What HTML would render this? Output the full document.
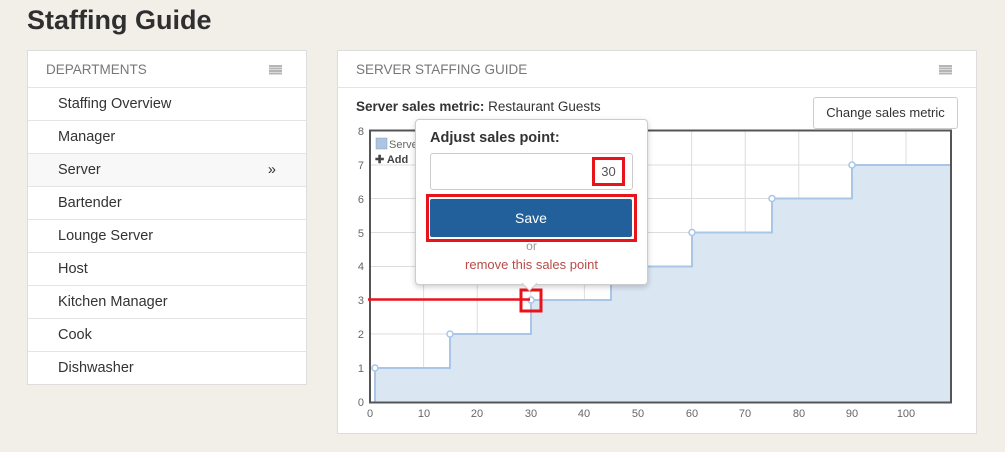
<!DOCTYPE html><html><head><style>
body{margin:0;width:1005px;height:452px;background:#f2efe9;font-family:"Liberation Sans",sans-serif;color:#333;position:relative;overflow:hidden}
.a{position:absolute}
h1{position:absolute;left:27px;top:5px;margin:0;font-size:27px;font-weight:bold;color:#2f2f2f}
.card{position:absolute;background:#fff;border:1px solid #ddd}
.row{height:32px;border-top:1px solid #e4e4e4;font-size:14.5px;line-height:32px;padding-left:30px;color:#333}
.hd{height:36px;line-height:38px;font-size:13.5px;color:#777;padding-left:18px;position:relative}
.ic{position:absolute;right:24px;top:14px;width:13px;height:10px;background:repeating-linear-gradient(#b5b5b5 0 2px,#fff 2px 2.5px)}
</style></head><body>
<h1>Staffing Guide</h1>
<div class="card" style="left:27px;top:50px;width:278px;height:333px">
<div class="hd">DEPARTMENTS<div class="ic"></div></div>
<div class="row">Staffing Overview</div><div class="row">Manager</div>
<div class="row" style="background:#f8f8f8;position:relative">Server<span style="position:absolute;right:30px">»</span></div>
<div class="row">Bartender</div><div class="row">Lounge Server</div><div class="row">Host</div><div class="row">Kitchen Manager</div><div class="row">Cook</div><div class="row">Dishwasher</div>
</div>
<div class="card" style="left:337px;top:50px;width:638px;height:382px">
<div class="hd">SERVER STAFFING GUIDE<div class="ic"></div></div>
<div style="border-top:1px solid #e4e4e4"></div>
<div class="a" style="left:18px;top:48px;font-size:13.5px"><b>Server sales metric:</b> Restaurant Guests</div>
<div class="a" style="left:475px;top:46px;width:143px;height:30px;border:1px solid #ccc;border-radius:3px;font-size:13px;line-height:30px;text-align:center">Change sales metric</div>
</div>
<svg class="a" style="left:0;top:0" width="1005" height="452">
<g stroke="#ddd" stroke-width="1">
<line x1="370" x2="951" y1="368" y2="368"/><line x1="370" x2="951" y1="334" y2="334"/><line x1="370" x2="951" y1="300" y2="300"/><line x1="370" x2="951" y1="266.5" y2="266.5"/><line x1="370" x2="951" y1="232.5" y2="232.5"/><line x1="370" x2="951" y1="198.5" y2="198.5"/><line x1="370" x2="951" y1="165" y2="165"/>
<line y1="131" y2="402" x1="423.6" x2="423.6"/><line y1="131" y2="402" x1="477.2" x2="477.2"/><line y1="131" y2="402" x1="530.8" x2="530.8"/><line y1="131" y2="402" x1="584.4" x2="584.4"/><line y1="131" y2="402" x1="638" x2="638"/><line y1="131" y2="402" x1="691.6" x2="691.6"/><line y1="131" y2="402" x1="745.2" x2="745.2"/><line y1="131" y2="402" x1="798.8" x2="798.8"/><line y1="131" y2="402" x1="852.4" x2="852.4"/><line y1="131" y2="402" x1="906" x2="906"/>
</g>
<path d="M375,402V368H450V334H531V300H611V266.5H692V232.5H772V198.5H852V165H951V402Z" fill="#dbe6f3"/>
<path d="M375,402V368H450V334H531V300H611V266.5H692V232.5H772V198.5H852V165H951" fill="none" stroke="#a9c6e6" stroke-width="2"/>
<g fill="#fff" stroke="#a9c6e6" stroke-width="1.5"><circle cx="375" cy="368" r="3"/><circle cx="450" cy="334" r="3"/><circle cx="531" cy="300" r="3"/><circle cx="692" cy="232.5" r="3"/><circle cx="772" cy="198.5" r="3"/><circle cx="852" cy="165" r="3"/></g>
<rect x="370" y="130.5" width="581" height="272" fill="none" stroke="#555" stroke-width="2"/>
<g font-size="11" fill="#666" text-anchor="end"><text x="364" y="406">0</text><text x="364" y="372">1</text><text x="364" y="338">2</text><text x="364" y="304">3</text><text x="364" y="270">4</text><text x="364" y="237">5</text><text x="364" y="203">6</text><text x="364" y="169">7</text><text x="364" y="135">8</text></g>
<g font-size="11" fill="#666" text-anchor="middle"><text x="370" y="417">0</text><text x="424" y="417">10</text><text x="477" y="417">20</text><text x="531" y="417">30</text><text x="584" y="417">40</text><text x="638" y="417">50</text><text x="692" y="417">60</text><text x="745" y="417">70</text><text x="799" y="417">80</text><text x="852" y="417">90</text><text x="906" y="417">100</text></g>
<rect x="376" y="138" width="11" height="11" fill="#a9c6e6" stroke="#999" stroke-width=".5"/><text x="389" y="148" font-size="11" fill="#666">Server</text>
<text x="375" y="163" font-size="11" font-weight="bold" fill="#444">✚ Add</text>
<line x1="368" x2="530" y1="299.5" y2="299.5" stroke="#e8141c" stroke-width="2.5"/>
<rect x="521" y="290" width="20" height="21" fill="none" stroke="#e8141c" stroke-width="3"/>
</svg>
<div class="a" style="left:415px;top:119px;width:231px;height:164px;background:#fff;border:1px solid #ccc;border-radius:4px;box-shadow:0 2px 6px rgba(0,0,0,.2)">
<div class="a" style="left:14px;top:10px;font-size:14.5px;font-weight:bold">Adjust sales point:</div>
<div class="a" style="left:14px;top:33px;width:201px;height:35px;border:1px solid #ccc;border-radius:3px"></div>
<div class="a" style="left:176px;top:37px;font-size:13px;line-height:23px;text-align:center;color:#555;border:3px solid #e8141c;box-sizing:border-box;width:33px;height:29px">30</div>
<div class="a" style="left:10px;top:74px;width:211px;height:48px;border:3px solid #e8141c;box-sizing:border-box"></div>
<div class="a" style="left:14px;top:79px;width:202px;height:38px;background:#21609b;border-radius:2px;color:#fff;font-size:14px;line-height:38px;text-align:center">Save</div>
<div class="a" style="left:0;top:119px;width:231px;text-align:center;font-size:12px;color:#999">or</div>
<div class="a" style="left:0;top:137px;width:231px;text-align:center;font-size:13px;color:#b94a48">remove this sales point</div>
<div class="a" style="left:108px;top:158px;width:10px;height:10px;background:#fff;border-right:1px solid #ccc;border-bottom:1px solid #ccc;transform:rotate(45deg)"></div>
</div>
</body></html>
